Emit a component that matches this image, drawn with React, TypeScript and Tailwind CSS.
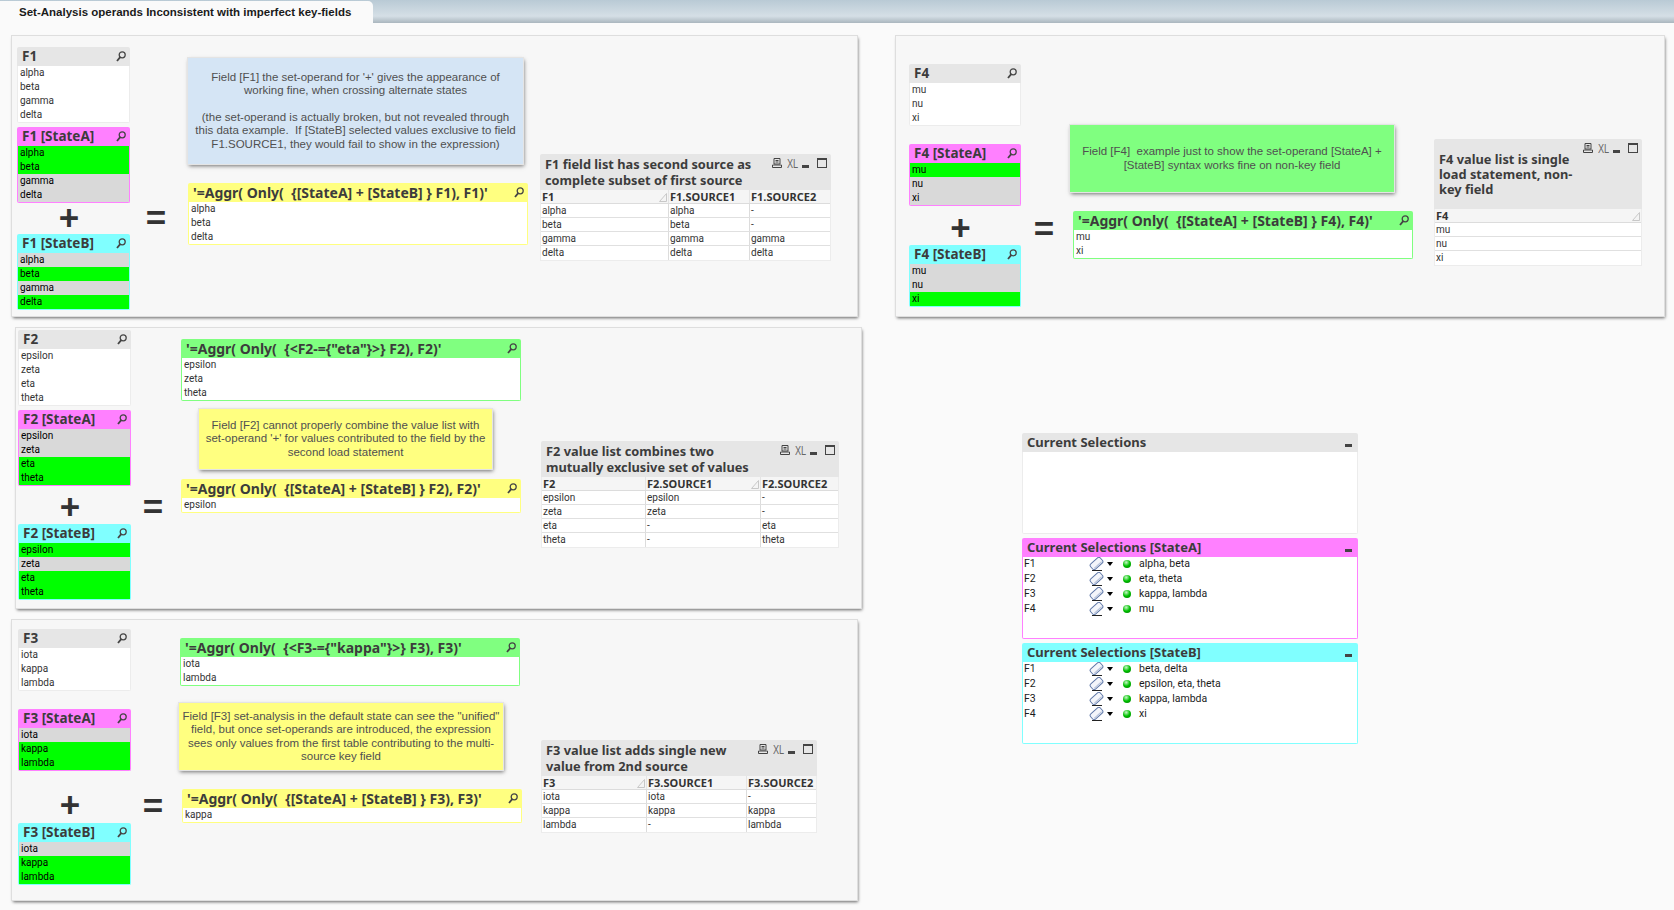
import type { ReactNode } from "react"

const ui = "font-['Roboto',sans-serif]"
const head = "font-['Noto_Sans',sans-serif] font-bold"
const note = "font-['Liberation_Sans',sans-serif]"

function Search() {
  return (
    <svg width="10" height="11" viewBox="0 0 10 11" className="shrink-0">
      <circle cx="6.2" cy="3.8" r="3" fill="none" stroke="#444" strokeWidth="1.3" />
      <path d="M4.2 6.2 L1 10" stroke="#444" strokeWidth="1.8" />
    </svg>
  )
}

function Eraser() {
  return (
    <svg width="15" height="14" viewBox="0 0 15 14" className="shrink-0">
      <g transform="rotate(-42 7.5 6.5)">
        <rect x="1" y="3" width="13" height="7" rx="2" fill="#f4f6fb" stroke="#5f78a8" strokeWidth="1" />
        <path d="M2.5 8.6 H12.5" stroke="#b8c4dc" strokeWidth="1.2" />
      </g>
      <path d="M3 13.5 H13" stroke="#222" strokeWidth="1" />
    </svg>
  )
}

function WindowIcons() {
  return (
    <div className="flex items-start pt-[4px] pr-[4px] shrink-0">
      <svg width="10" height="10" viewBox="0 0 10 10">
        <path d="M2 .5 H8 V6 H2 Z M.5 7 H9.5 V9.5 H.5 Z" fill="none" stroke="#444" strokeWidth="1" />
        <path d="M3.5 2.5 H6.5 M3.5 4 H6.5" stroke="#444" strokeWidth="1" />
      </svg>
      <span className={`${note} block ml-[5px] w-[10px] text-[13.5px] leading-[11px] text-[#666] scale-x-[0.68] origin-left`}>XL</span>
      <span className="block ml-[5px] w-[7px] h-[3px] bg-[#444] mt-[7px]" />
      <span className="block ml-[8px] w-[10px] h-[10px] border border-[#444] border-t-[2px]" />
    </div>
  )
}

function SortMark() {
  return (
    <svg width="8" height="9" viewBox="0 0 8 9" className="absolute right-[1px] top-[3px]">
      <path d="M7.5 .5 V8.5 H.5 Z" fill="#f4f4f4" stroke="#c8c8c8" strokeWidth="1" />
    </svg>
  )
}

type Tint = "grey" | "pink" | "cyan"

const tints: Record<Tint, { bar: string; box: string }> = {
  grey: { bar: "bg-[#e6e6e6]", box: "border-[#ececec]" },
  pink: { bar: "bg-[#ff80ff]", box: "border-[#ff80ff]" },
  cyan: { bar: "bg-[#80ffff]", box: "border-[#80ffff]" },
}

function ListBox({ title, rows, tint = "grey", on }: { title: string; rows: string[]; tint?: Tint; on?: string[] }) {
  return (
    <div>
      <div className={`${tints[tint].bar} h-[19px] flex items-start justify-between pl-[5px] pr-[4px] pt-[2px] rounded-t-[2px]`}>
        <span className={`${head} text-[13.5px] leading-[15px] text-[#3c3c3c]`}>{title}</span>
        <span className="mt-[2px]"><Search /></span>
      </div>
      <div className={`${tints[tint].box} border border-t-0 bg-white rounded-b-[2px]`}>
        {rows.map((r) => (
          <div
            key={r}
            className={`${ui} h-[14px] pl-[2px] text-[10px] leading-[14px] ${
              on === undefined ? "text-[#333]" : on.includes(r) ? "bg-[#00ff00] text-black" : "bg-[#d9d9d9] text-black"
            }`}
          >
            {r}
          </div>
        ))}
      </div>
    </div>
  )
}

function Plus({ boxClass }: { boxClass: string }) {
  return (
    <div className={`${boxClass} ${note} flex items-center justify-center pr-[9px] text-[35px] font-bold leading-none text-[#333]`}>
      +
    </div>
  )
}

function Equals({ boxClass }: { boxClass: string }) {
  return (
    <div className={`${boxClass} ${note} h-[12px] flex items-center justify-center shrink-0 text-[35px] font-bold leading-none text-[#333]`}>
      =
    </div>
  )
}

function NoteBox({ className, children }: { className: string; children: ReactNode }) {
  return (
    <div className={`${className} ${note} flex flex-col items-center justify-center text-center whitespace-nowrap text-[11.5px] leading-[13.5px] text-[#505050] shadow-[0_0_0_1px_#e4e4e4,1px_2px_4px_rgba(0,0,0,0.55)]`}>
      {children}
    </div>
  )
}

function ValueBox({ title, rows, bar, box, className }: { title: string; rows: string[]; bar: string; box: string; className: string }) {
  return (
    <div className={className}>
      <div className={`${bar} h-[19px] flex items-start justify-between pl-[5px] pr-[4px] pt-[2px] rounded-t-[2px]`}>
        <span className={`${head} text-[14px] leading-[15px] whitespace-pre text-[#3c3c3c]`}>{title}</span>
        <span className="mt-[2px]"><Search /></span>
      </div>
      <div className={`${box} border border-t-0 bg-white rounded-b-[2px]`}>
        {rows.map((r) => (
          <div key={r} className={`${ui} h-[14px] pl-[2px] text-[10px] leading-[14px] text-[#333]`}>
            {r}
          </div>
        ))}
      </div>
    </div>
  )
}

function DataTable({ title, cols, rows, grid, width, barHeight, sortCol }: {
  title: ReactNode
  cols: string[]
  rows: string[][]
  grid: string
  width: string
  barHeight: string
  sortCol: number
}) {
  return (
    <div className={width}>
      <div className={`${barHeight} bg-[#e6e6e6] flex justify-between rounded-t-[2px] pl-[5px]`}>
        <div className={`${head} pt-[2px] text-[12.8px] leading-[16px] text-[#3c3c3c]`}>{title}</div>
        <WindowIcons />
      </div>
      <div className="border border-t-0 border-[#ececec] bg-white">
        <div className={`grid ${grid} h-[14px] bg-[#f5f5f5] border-b border-[#dcdcdc]`}>
          {cols.map((c, i) => (
            <div key={c} className={`${head} relative pl-[1px] text-[11px] leading-[13px] text-[#333] ${i > 0 ? "border-l border-[#e4e4e4]" : ""}`}>
              {c}
              {i === sortCol && <SortMark />}
            </div>
          ))}
        </div>
        {rows.map((row) => (
          <div key={row[0]} className={`grid ${grid} h-[14px] border-b border-[#e0e0e0] last:border-b-0`}>
            {row.map((v, i) => (
              <div key={i} className={`${ui} pl-[1px] text-[10px] leading-[13px] text-[#333] ${i > 0 ? "border-l border-[#dcdcdc]" : ""}`}>
                {v}
              </div>
            ))}
          </div>
        ))}
      </div>
    </div>
  )
}

function Selections({ title, tint, rows, className }: { title: string; tint: Tint; rows: [string, string][]; className: string }) {
  return (
    <div className={`${className} flex flex-col h-[101px]`}>
      <div className={`${tints[tint].bar} h-[19px] shrink-0 flex items-start justify-between pl-[5px] pr-[4px] pt-[2px] rounded-t-[2px]`}>
        <span className={`${head} text-[13px] leading-[15px] text-[#3c3c3c]`}>{title}</span>
        <span className="block w-[7px] h-[3px] bg-[#444] mt-[9px] mr-[2px]" />
      </div>
      <div className={`${tints[tint].box} border border-t-0 bg-white grow rounded-b-[2px]`}>
        {rows.map(([f, v]) => (
          <div key={f} className={`${ui} h-[15px] pb-[1px] flex items-center text-[10.5px] text-[#1c1c1c]`}>
            <span className="w-[66px] pl-[1px]">{f}</span>
            <Eraser />
            <span className="ml-[3px] w-0 h-0 border-x-[3.5px] border-x-transparent border-t-[4px] border-t-black" />
            <span className="ml-[10px] w-[8px] h-[8px] rounded-full bg-[radial-gradient(circle_at_40%_30%,#c8f8c8,#00c000_50%,#007a00)]" />
            <span className="ml-[8px]">{v}</span>
          </div>
        ))}
      </div>
    </div>
  )
}

const panel = "bg-[#f7f7f7] flex items-start shadow-[0_0_0_1px_#dedede,1px_2px_3px_rgba(0,0,0,0.6)]"
const green = { bar: "bg-[#80ff80]", box: "border-[#80ff80]" }
const yellow = { bar: "bg-[#ffff80]", box: "border-[#ffff80]" }

export default function App() {
  return (
    <div className="h-[910px] w-[1674px] overflow-hidden bg-[#fafafa]">
      {/* tab row */}
      <div className="flex h-[23px] bg-[linear-gradient(#b9cad5,#d5dfe6_70%,#aab6be)]">
        <div className="mt-[1px] w-[373px] bg-[#fafafa] rounded-tr-[5px] pl-[19px]">
          <span className={`${note} block text-[11.5px] leading-[23px] font-bold text-[#1a1a1a]`}>
            Set-Analysis operands Inconsistent with imperfect key-fields
          </span>
        </div>
      </div>

      <div className="flex items-start">
        <div className="ml-[12px] w-[849px] shrink-0">
          {/* F1 */}
          <section className={`${panel} mt-[13px] w-[845px] h-[280px]`}>
            <div className="ml-[5px] mt-[11px] w-[113px] shrink-0">
              <ListBox title="F1" rows={["alpha", "beta", "gamma", "delta"]} />
              <div className="mt-[4px]">
                <ListBox title="F1 [StateA]" tint="pink" rows={["alpha", "beta", "gamma", "delta"]} on={["alpha", "beta"]} />
              </div>
              <Plus boxClass="h-[31px] pb-[3px]" />
              <ListBox title="F1 [StateB]" tint="cyan" rows={["alpha", "beta", "gamma", "delta"]} on={["beta", "delta"]} />
            </div>
            <Equals boxClass="ml-[17px] mt-[175px] w-[18px]" />
            <div className="ml-[23px] mt-[22px] w-[340px] shrink-0">
              <NoteBox className="w-[335px] h-[106px] bg-[#d5e5f5]">
                <p>Field [F1] the set-operand for '+' gives the appearance of</p>
                <p>working fine, when crossing alternate states</p>
                <p className="mt-[13px]">(the set-operand is actually broken, but not revealed through</p>
                <p>this data example.&nbsp; If [StateB] selected values exclusive to field</p>
                <p>F1.SOURCE1, they would fail to show in the expression)</p>
              </NoteBox>
              <ValueBox className="mt-[19px]" {...yellow} title="'=Aggr( Only(  {[StateA] + [StateB] } F1), F1)'" rows={["alpha", "beta", "delta"]} />
            </div>
            <div className="ml-[12px] mt-[118px] shrink-0">
              <DataTable
                width="w-[291px]"
                barHeight="h-[36px]"
                grid="grid-cols-[127px_81px_81px]"
                sortCol={0}
                title={<>F1 field list has second source as<br />complete subset of first source</>}
                cols={["F1", "F1.SOURCE1", "F1.SOURCE2"]}
                rows={[["alpha", "alpha", "-"], ["beta", "beta", "-"], ["gamma", "gamma", "gamma"], ["delta", "delta", "delta"]]}
              />
            </div>
          </section>

          {/* F2 */}
          <section className={`${panel} mt-[12px] ml-[4px] w-[845px] h-[280px]`}>
            <div className="ml-[2px] mt-[2px] w-[113px] shrink-0">
              <ListBox title="F2" rows={["epsilon", "zeta", "eta", "theta"]} />
              <div className="mt-[4px]">
                <ListBox title="F2 [StateA]" tint="pink" rows={["epsilon", "zeta", "eta", "theta"]} on={["eta", "theta"]} />
              </div>
              <Plus boxClass="h-[38px] pt-[2px]" />
              <ListBox title="F2 [StateB]" tint="cyan" rows={["epsilon", "zeta", "eta", "theta"]} on={["epsilon", "eta", "theta"]} />
            </div>
            <Equals boxClass="ml-[13px] mt-[172px] w-[18px]" />
            <div className="ml-[19px] mt-[11px] w-[340px] shrink-0">
              <ValueBox className="" {...green} title={`'=Aggr( Only(  {<F2-={"eta"}>} F2), F2)'`} rows={["epsilon", "zeta", "theta"]} />
              <NoteBox className="ml-[18px] mt-[8px] w-[293px] h-[60px] bg-[#ffff80]">
                <p>Field [F2] cannot properly combine the value list with</p>
                <p>set-operand '+' for values contributed to the field by the</p>
                <p>second load statement</p>
              </NoteBox>
              <ValueBox className="mt-[10px]" {...yellow} title="'=Aggr( Only(  {[StateA] + [StateB] } F2), F2)'" rows={["epsilon"]} />
            </div>
            <div className="ml-[20px] mt-[113px] shrink-0">
              <DataTable
                width="w-[298px]"
                barHeight="h-[36px]"
                grid="grid-cols-[103px_115px_78px]"
                sortCol={1}
                title={<>F2 value list combines two<br />mutually exclusive set of values</>}
                cols={["F2", "F2.SOURCE1", "F2.SOURCE2"]}
                rows={[["epsilon", "epsilon", "-"], ["zeta", "zeta", "-"], ["eta", "-", "eta"], ["theta", "-", "theta"]]}
              />
            </div>
          </section>

          {/* F3 */}
          <section className={`${panel} mt-[12px] w-[845px] h-[280px]`}>
            <div className="ml-[6px] mt-[9px] w-[113px] shrink-0">
              <ListBox title="F3" rows={["iota", "kappa", "lambda"]} />
              <div className="mt-[18px]">
                <ListBox title="F3 [StateA]" tint="pink" rows={["iota", "kappa", "lambda"]} on={["kappa", "lambda"]} />
              </div>
              <Plus boxClass="h-[52px] pt-[15px]" />
              <ListBox title="F3 [StateB]" tint="cyan" rows={["iota", "kappa", "lambda"]} on={["kappa", "lambda"]} />
            </div>
            <Equals boxClass="ml-[13px] mt-[179px] w-[18px]" />
            <div className="ml-[18px] mt-[18px] w-[342px] shrink-0">
              <ValueBox className="w-[340px]" {...green} title={`'=Aggr( Only(  {<F3-={"kappa"}>} F3), F3)'`} rows={["iota", "lambda"]} />
              <NoteBox className="ml-[-1px] mt-[17px] w-[324px] h-[67px] bg-[#ffff80]">
                <p>Field [F3] set-analysis in the default state can see the "unified"</p>
                <p>field, but once set-operands are introduced, the expression</p>
                <p>sees only values from the first table contributing to the multi-</p>
                <p>source key field</p>
              </NoteBox>
              <ValueBox className="ml-[2px] mt-[19px] w-[340px]" {...yellow} title="'=Aggr( Only(  {[StateA] + [StateB] } F3), F3)'" rows={["kappa"]} />
            </div>
            <div className="ml-[19px] mt-[120px] shrink-0">
              <DataTable
                width="w-[276px]"
                barHeight="h-[36px]"
                grid="grid-cols-[104px_100px_70px]"
                sortCol={0}
                title={<>F3 value list adds single new<br />value from 2nd source</>}
                cols={["F3", "F3.SOURCE1", "F3.SOURCE2"]}
                rows={[["iota", "iota", "-"], ["kappa", "kappa", "kappa"], ["lambda", "-", "lambda"]]}
              />
            </div>
          </section>
        </div>

        <div className="ml-[35px] shrink-0">
          {/* F4 */}
          <section className={`${panel} mt-[13px] w-[768px] h-[280px]`}>
            <div className="ml-[13px] mt-[28px] w-[112px] shrink-0">
              <ListBox title="F4" rows={["mu", "nu", "xi"]} />
              <div className="mt-[18px]">
                <ListBox title="F4 [StateA]" tint="pink" rows={["mu", "nu", "xi"]} on={["mu"]} />
              </div>
              <Plus boxClass="h-[39px] pt-[4px]" />
              <ListBox title="F4 [StateB]" tint="cyan" rows={["mu", "nu", "xi"]} on={["xi"]} />
            </div>
            <Equals boxClass="ml-[13px] mt-[186px] w-[20px]" />
            <div className="ml-[16px] mt-[89px] w-[343px] shrink-0">
              <NoteBox className="w-[324px] h-[67px] bg-[#80ff80]">
                <p>Field [F4]&nbsp; example just to show the set-operand [StateA] +</p>
                <p>[StateB] syntax works fine on non-key field</p>
              </NoteBox>
              <ValueBox className="ml-[3px] mt-[19px] w-[340px]" {...green} title="'=Aggr( Only(  {[StateA] + [StateB] } F4), F4)'" rows={["mu", "xi"]} />
            </div>
            <div className="ml-[21px] mt-[103px] shrink-0">
              <DataTable
                width="w-[208px]"
                barHeight="h-[70px]"
                grid="grid-cols-[206px]"
                sortCol={0}
                title={<div className="mt-[11px] leading-[15px]">F4 value list is single<br />load statement, non-<br />key field</div>}
                cols={["F4"]}
                rows={[["mu"], ["nu"], ["xi"]]}
              />
            </div>
          </section>

          <div className="ml-[126px] mt-[117px] w-[336px]">
            <Selections title="Current Selections" tint="grey" rows={[]} className="" />
            <Selections
              className="mt-[4px]"
              title="Current Selections [StateA]"
              tint="pink"
              rows={[["F1", "alpha, beta"], ["F2", "eta, theta"], ["F3", "kappa, lambda"], ["F4", "mu"]]}
            />
            <Selections
              className="mt-[4px]"
              title="Current Selections [StateB]"
              tint="cyan"
              rows={[["F1", "beta, delta"], ["F2", "epsilon, eta, theta"], ["F3", "kappa, lambda"], ["F4", "xi"]]}
            />
          </div>
        </div>
      </div>
    </div>
  )
}
